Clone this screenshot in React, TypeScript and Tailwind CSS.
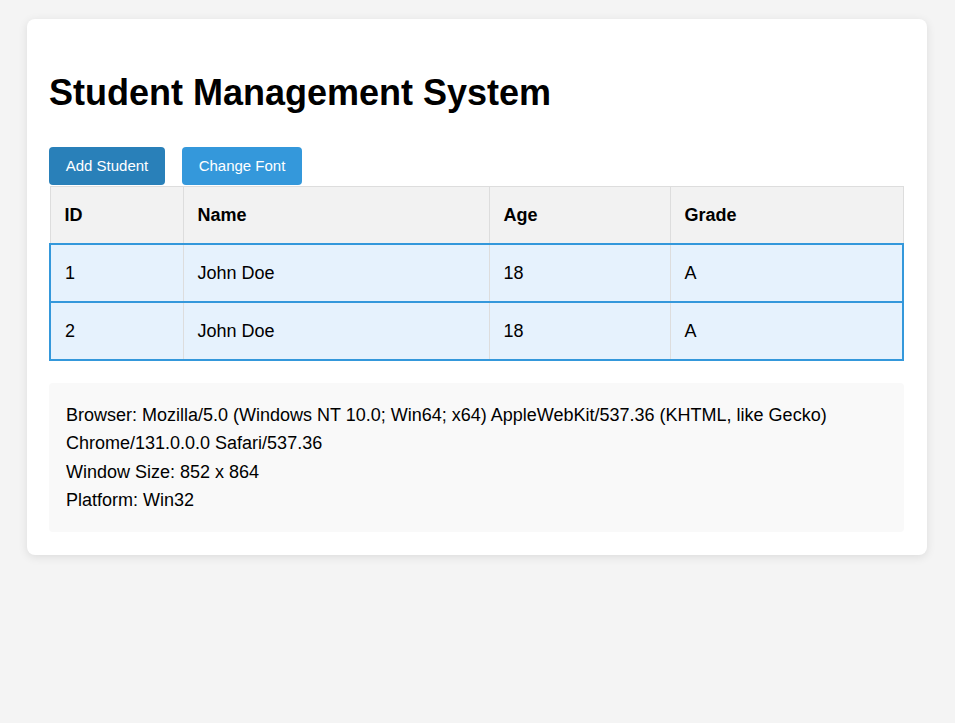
const STUDENTS = [
  { id: 1, name: 'John Doe', age: 18, grade: 'A' },
  { id: 2, name: 'John Doe', age: 18, grade: 'A' },
];

const COLS = ['ID', 'Name', 'Age', 'Grade'];

export default function App() {
  return (
    <div
      className="min-h-screen bg-[#f4f4f4] pt-[19px] text-black"
      style={{ fontFamily: '"Liberation Sans", Arial, sans-serif' }}
    >
      <div className="ml-[27px] w-[900px] rounded-[8px] bg-white pb-[23px] pl-[22px] pr-[23px] pt-[20px] shadow-[0_2px_10px_rgba(0,0,0,0.1)]">
        <h1 className="mt-[34px] text-[36px] font-bold leading-[40px]">Student Management System</h1>

        <div className="mt-[34px] flex gap-[17px]">
          <button className="h-[38px] w-[116px] rounded-[4px] bg-[#2980b9] text-[15px] text-white">
            Add Student
          </button>
          <button className="h-[38px] w-[120px] rounded-[4px] bg-[#3498db] text-[15px] text-white">
            Change Font
          </button>
        </div>

        <table className="mt-px w-full border-collapse text-left text-[18px] leading-[20px]">
          <colgroup>
            <col className="w-[133px]" />
            <col className="w-[306px]" />
            <col className="w-[181px]" />
            <col />
          </colgroup>
          <thead>
            <tr className="bg-[#f2f2f2]">
              {COLS.map((col) => (
                <th key={col} className="border border-[#ddd] px-[14px] py-[18px] font-bold">
                  {col}
                </th>
              ))}
            </tr>
          </thead>
          <tbody>
            {STUDENTS.map((s) => (
              <tr key={s.id} className="border-2 border-[#3498db] bg-[#e6f2fd]">
                <td className="border-x border-[#ddd] px-[14px] py-[18px]">{s.id}</td>
                <td className="border-x border-[#ddd] px-[14px] py-[18px]">{s.name}</td>
                <td className="border-x border-[#ddd] px-[14px] py-[18px]">{s.age}</td>
                <td className="border-x border-[#ddd] px-[14px] py-[18px]">{s.grade}</td>
              </tr>
            ))}
          </tbody>
        </table>

        <div className="mt-[22px] rounded-[4px] bg-[#f9f9f9] px-[17px] pb-[17px] pt-[18px] text-[18px] leading-[28.4px]">
          <p>
            Browser: Mozilla/5.0 (Windows NT 10.0; Win64; x64) AppleWebKit/537.36 (KHTML, like Gecko)
            Chrome/131.0.0.0 Safari/537.36
          </p>
          <p>Window Size: 852 x 864</p>
          <p>Platform: Win32</p>
        </div>
      </div>
    </div>
  );
}
